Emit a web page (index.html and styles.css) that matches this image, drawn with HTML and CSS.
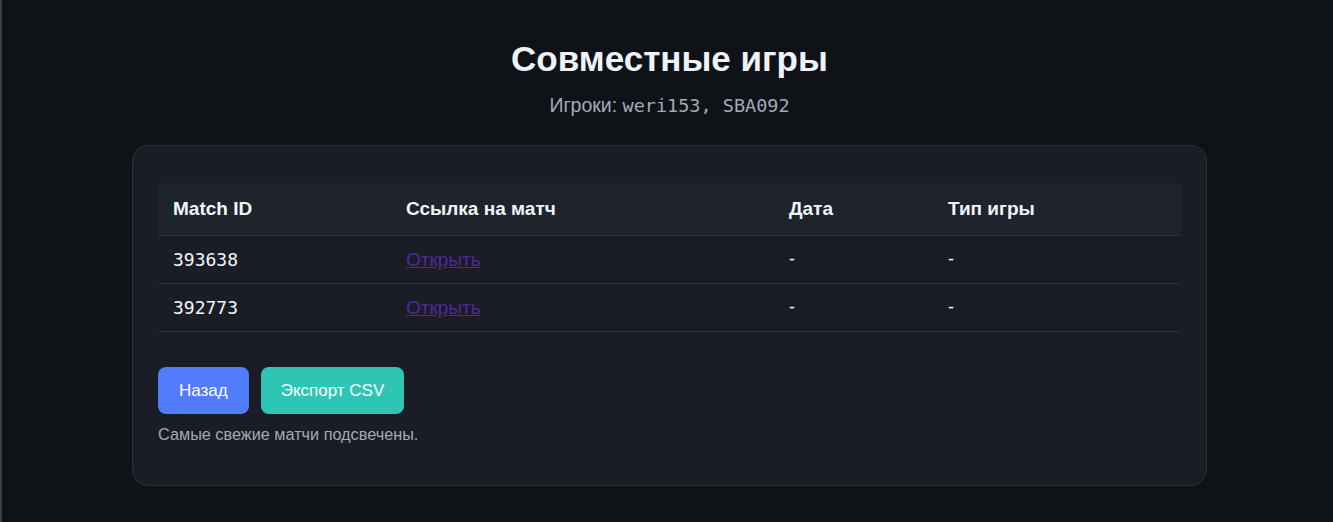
FILE: index.html
```html
<!DOCTYPE html>
<html lang="ru">
<head>
<meta charset="utf-8">
<title>Совместные игры</title>
<link rel="stylesheet" href="styles.css">
</head>
<body>
<div class="page">
  <header class="head">
    <h1 class="title">Совместные игры</h1>
    <p class="subtitle">Игроки: <code class="mono">weri153, SBA092</code></p>
  </header>
  <section class="card">
    <table class="games">
      <thead>
        <tr>
          <th class="c-id">Match ID</th>
          <th class="c-link">Ссылка на матч</th>
          <th class="c-date">Дата</th>
          <th class="c-type">Тип игры</th>
        </tr>
      </thead>
      <tbody>
        <tr>
          <td class="mono-cell">393638</td>
          <td><a class="match-link" href="#m393638">Открыть</a></td>
          <td>-</td>
          <td>-</td>
        </tr>
        <tr>
          <td class="mono-cell">392773</td>
          <td><a class="match-link" href="#m392773">Открыть</a></td>
          <td>-</td>
          <td>-</td>
        </tr>
      </tbody>
    </table>
    <div class="actions">
      <button class="btn btn-back" type="button">Назад</button>
      <button class="btn btn-export" type="button">Экспорт CSV</button>
    </div>
    <p class="note">Самые свежие матчи подсвечены.</p>
  </section>
</div>
</body>
</html>
```

FILE: styles.css
```css
html, body {
  margin: 0;
  padding: 0;
  background: #0f1217;
}
body {
  min-height: 522px;
  border-left: 2px solid #3c3f45;
  box-sizing: border-box;
  padding-left: 4px;
  font-family: "Liberation Sans", Arial, sans-serif;
  color: #e8edf3;
}
.page {
  width: 1075px;
  margin: 0 auto;
  padding-top: 38px;
}
.head {
  text-align: center;
}
.title {
  margin: 0;
  font-size: 35px;
  line-height: 42px;
  font-weight: 700;
  color: #eef3f9;
}
.subtitle {
  margin: 13px 0 0;
  height: 24px;
  font-size: 19.5px;
  line-height: 24px;
  color: #a3abb7;
}
.mono {
  font-family: "DejaVu Sans Mono", monospace;
  font-size: 18.5px;
  line-height: 1;
}
.card {
  margin-top: 28px;
  background: #1a1d25;
  border: 1px solid #2b2f37;
  border-radius: 16px;
  padding: 37px 25px 41px;
}
.games {
  width: 100%;
  border-collapse: collapse;
}
.games th {
  background: #1f232b;
  text-align: left;
  font-weight: 700;
  font-size: 19px;
  height: 52px;
  padding: 0 15px;
  border-bottom: 1px solid #2e323a;
  color: #f2f6fb;
}
.c-id { width: 203px; }
.c-link { width: 353px; }
.c-date { width: 129px; }
.games td {
  height: 47px;
  padding: 0 15px;
  font-size: 18px;
  border-bottom: 1px solid #2e323a;
  color: #f2f6fb;
}
.mono-cell {
  font-family: "DejaVu Sans Mono", monospace;
  font-size: 15.5px;
}
.match-link {
  color: #52279a;
  font-size: 19px;
}
.actions {
  display: flex;
  gap: 12px;
  margin-top: 35px;
}
.btn {
  border: 0;
  border-radius: 8px;
  height: 47px;
  padding: 0 21px;
  font-family: "Liberation Sans", Arial, sans-serif;
  font-size: 17px;
  color: #ffffff;
}
.btn-export { padding: 0 20px; }
.btn-back { background: #527cfe; }
.btn-export { background: #2ec5b4; }
.note {
  margin: 11px 0 0;
  font-size: 16.25px;
  color: #a3abb7;
}
```
